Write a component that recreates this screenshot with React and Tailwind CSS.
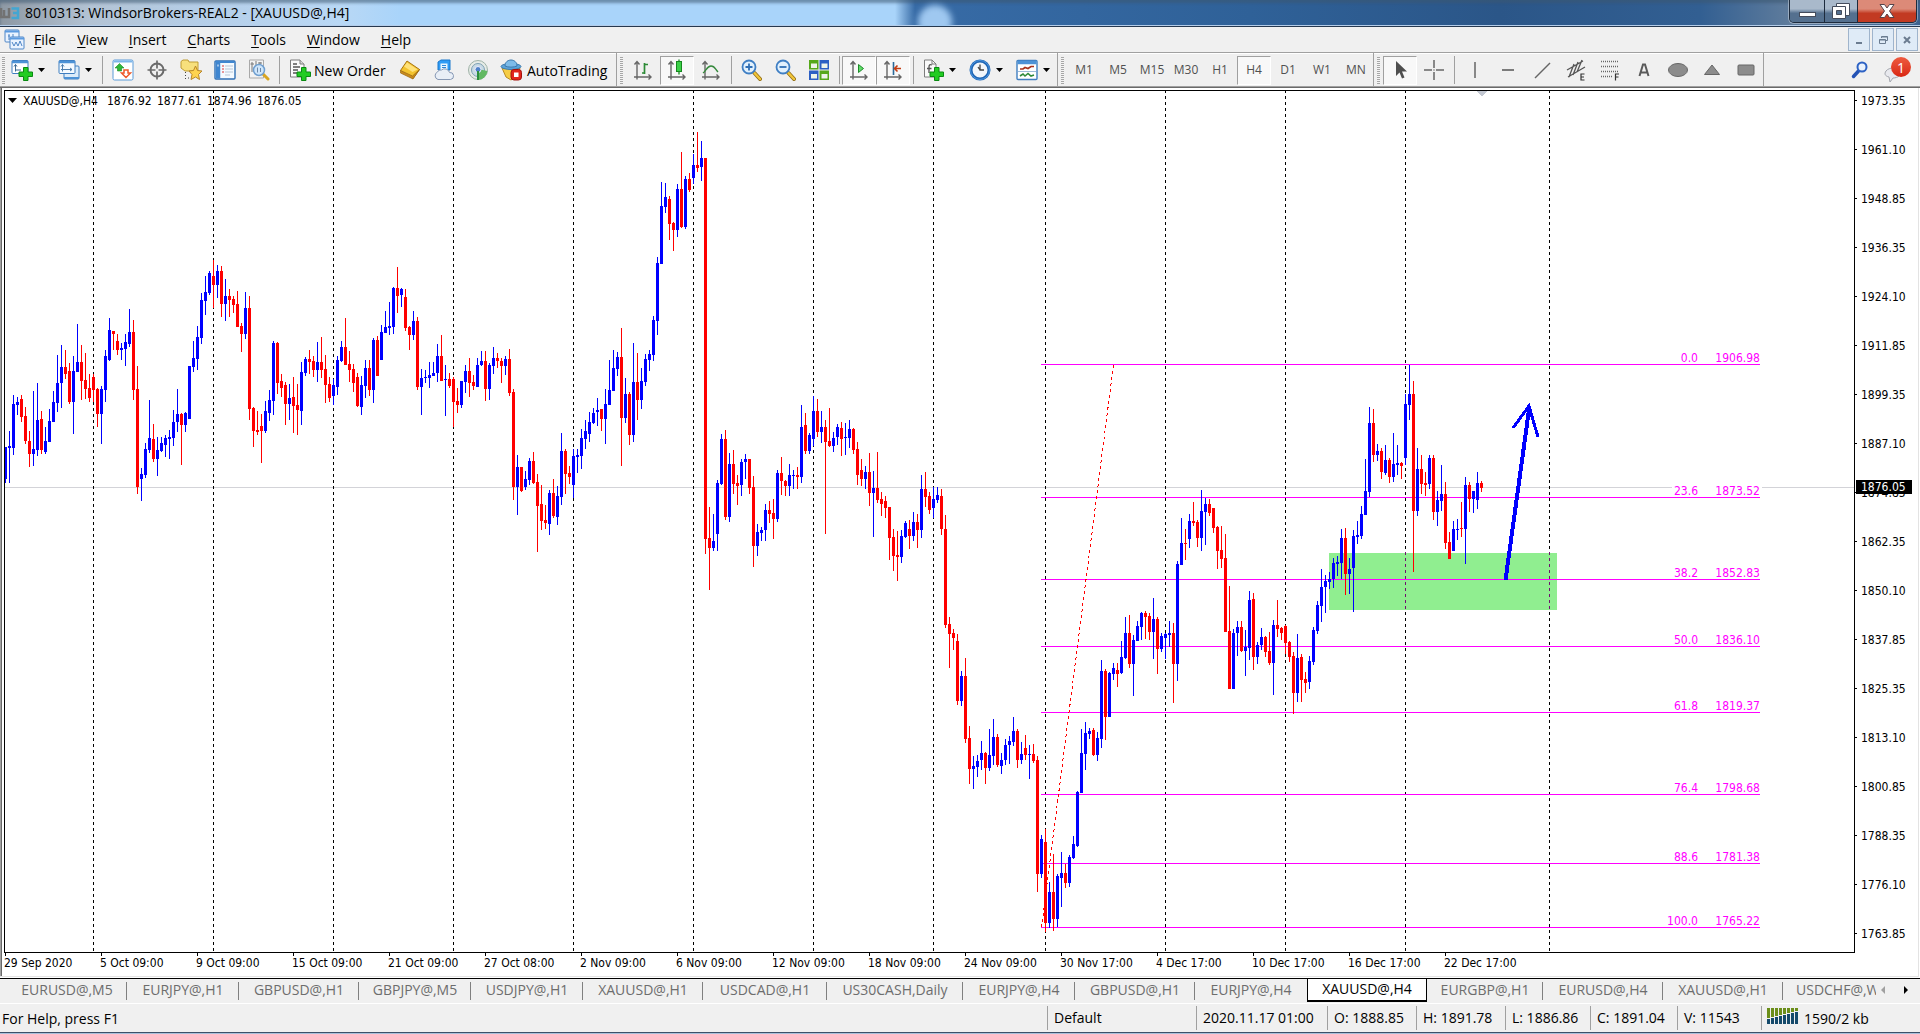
import clsx from 'clsx';

// direction (u/d), high, body top, body bottom, low - one bar every 4px
const BARS = `
u447 447 479 483,u431 446 448 483,u395 404 448 455,u397 402 405 415,d395 399 417 422,d407 416 441 444,d431 441 454 467,u391 449 454 466,
u383 420 450 456,d411 419 450 454,u427 441 452 454,u409 421 442 442,u391 402 422 422,u355 383 403 412,u345 367 383 408,d350 367 374 379,
d363 371 402 404,u356 371 402 434,u324 362 372 372,d345 362 381 400,d353 380 389 399,d374 388 398 402,d374 377 390 402,d388 389 414 427,
u386 389 414 444,u350 356 390 402,u318 330 360 361,d331 331 334 350,d334 341 350 355,u343 348 350 360,u334 342 349 366,u309 332 344 347,
d320 332 390 400,d366 389 487 494,u468 474 479 501,u443 449 475 478,u400 438 450 453,d424 439 459 462,u437 450 459 476,u437 443 451 452,
u435 438 445 457,u430 437 439 459,u410 422 438 446,u389 414 422 432,d413 414 425 465,u412 413 425 432,u366 366 419 419,u341 358 367 372,
u326 337 359 370,u293 300 338 344,u276 292 301 315,u271 273 293 295,d260 276 285 308,u265 271 285 298,d266 271 304 317,u279 296 304 321,
d289 296 300 317,d296 299 305 313,d291 304 327 327,d323 326 334 352,u292 308 334 339,d296 308 409 420,d407 408 431 447,d411 430 432 435,
d414 426 431 463,u401 411 431 433,u390 400 413 421,u341 343 401 415,d342 343 383 394,d374 381 388 397,d382 385 404 425,u384 398 404 420,
d377 397 406 433,d384 405 410 435,u362 372 411 425,u357 359 373 376,d350 359 362 374,d356 361 370 377,u342 362 370 382,d337 362 370 378,
d355 369 385 403,d377 384 398 402,u379 385 396 405,u356 360 387 395,u341 347 361 362,d318 347 365 365,d351 364 370 382,d364 369 383 392,
d373 377 406 407,u376 385 407 415,u360 368 386 398,d360 368 390 396,u338 340 390 403,d336 340 376 376,u325 332 360 360,u311 327 333 333,
u302 326 328 335,u287 288 327 334,d267 288 296 313,u288 289 295 307,d289 297 328 331,d326 327 335 350,u311 321 335 340,d317 321 387 390,
u369 378 387 415,u370 377 378 383,u362 375 378 388,u362 373 376 376,u344 356 373 382,d335 356 381 381,u365 379 380 416,d373 379 386 388,
d377 379 402 427,d388 401 405 413,u381 381 405 408,u365 371 382 393,d358 371 383 397,d375 382 386 390,u358 365 387 387,u351 361 365 366,
d351 361 389 401,u363 365 389 400,u347 358 366 374,d353 358 361 368,d358 361 366 383,u356 359 366 375,d349 359 393 396,d389 392 487 500,
u455 467 487 515,d467 467 491 492,u471 479 487 490,u458 461 480 485,d452 461 483 484,d474 482 506 552,d485 504 521 530,d505 520 523 529,
u490 493 524 535,d479 493 516 518,u486 496 517 525,u433 451 497 505,d449 451 474 494,d466 473 477 484,u449 456 485 498,u449 455 457 473,
u429 438 456 469,u420 431 439 449,u412 422 434 442,u408 413 423 424,u398 410 412 426,d409 409 419 431,u389 404 419 444,u360 390 405 405,
u350 368 391 391,u352 357 369 376,d328 357 418 466,u378 394 418 423,d392 394 435 445,u343 382 435 442,d353 382 400 420,u368 381 400 409,
u354 359 382 386,u350 354 360 371,u316 320 355 361,u257 263 321 335,u182 206 264 264,u183 197 207 213,d196 199 224 240,d222 223 230 251,
u184 189 230 237,d152 189 227 228,u176 179 227 229,d173 179 190 192,u154 165 178 184,d132 165 168 172,u141 158 167 181,d158 158 539 554,
d507 538 548 590,u514 541 548 551,u480 483 534 551,u434 439 484 485,d430 439 517 520,u453 464 517 522,d450 464 484 494,d475 483 486 505,
u459 462 485 496,u454 459 462 479,d459 459 488 494,d476 487 546 567,u524 532 546 556,u527 530 533 541,u504 510 530 541,d501 510 514 523,
d499 513 519 539,u470 473 519 522,d457 473 481 495,d480 481 486 496,u464 475 486 496,u470 475 476 489,d467 475 477 489,u405 427 477 483,
d413 425 451 454,u433 435 451 454,u396 411 439 446,d399 411 432 437,u411 427 432 443,d420 427 442 534,d408 441 446 447,u432 438 446 452,
u424 427 437 445,d422 428 439 456,u423 437 438 455,u420 429 438 448,d428 429 450 454,d442 449 475 485,d459 470 479 486,u466 472 479 489,
d453 472 493 506,u471 488 493 537,d452 488 500 503,d492 499 504 516,d496 501 508 518,d507 507 538 560,d529 537 556 571,d531 555 557 581,
u530 536 557 563,u521 523 537 538,d520 529 536 549,u512 522 536 541,d514 522 530 548,u475 489 530 538,d472 489 497 507,d492 496 510 514,
u487 499 508 518,u487 495 500 503,d489 496 529 535,d515 529 625 628,d617 624 634 668,d629 633 638 650,d634 641 701 705,u671 676 701 706,
d658 676 739 743,d726 738 769 784,u756 766 769 789,u755 761 767 777,u741 753 760 770,d752 753 768 784,u729 755 768 771,u719 737 756 765,
d734 737 765 767,u753 760 766 774,u739 745 760 765,u736 741 745 764,u717 731 742 746,d729 731 760 768,u742 754 760 764,d735 748 755 760,
u745 754 755 779,d744 754 761 763,d756 760 874 892,u835 839 874 878,d829 842 923 932,u882 892 923 928,d854 892 919 931,u874 876 919 927,
u852 873 878 907,d864 873 883 888,u855 857 883 887,u836 844 858 859,u791 792 846 847,u729 753 793 793,u722 733 754 770,u728 731 734 739,
d728 730 755 756,u732 738 755 761,u660 671 739 748,d669 671 717 740,u672 673 717 717,u663 668 674 680,d663 670 674 687,u641 657 673 674,
u617 633 658 659,d615 633 664 668,u635 640 664 696,u621 626 641 641,u612 613 627 640,d611 613 617 639,d613 616 632 640,u598 619 632 659,
d617 619 649 674,u633 636 649 652,u633 634 638 659,u621 633 635 647,d623 633 664 703,u561 564 664 681,u518 543 565 565,d529 543 544 560,
u514 521 539 548,d502 521 523 526,d520 522 538 547,u490 511 538 551,u498 504 512 545,d499 504 513 516,d508 508 528 533,d526 527 551 569,
d526 550 559 568,d534 558 632 632,d586 631 689 689,u629 633 689 689,u621 627 633 656,d621 627 651 652,u630 647 651 676,u591 600 648 660,
d593 599 657 670,u642 645 657 664,u628 637 645 650,d636 637 652 657,d632 651 663 665,u620 625 663 695,d600 625 629 637,d627 628 633 640,
d625 626 643 654,d641 642 657 662,d652 656 693 714,u634 658 693 702,d654 657 680 702,d672 679 683 693,u656 661 682 689,u627 630 662 665,
u601 605 631 634,u569 587 606 622,u575 581 587 613,u572 579 582 589,u558 563 579 588,u556 562 564 576,u529 538 563 579,d528 538 574 595,
u558 569 574 594,u530 536 568 612,u521 535 537 544,u506 514 536 539,u459 491 515 515,u407 423 492 497,d409 423 455 462,u444 451 455 461,
d448 451 472 479,u445 460 473 475,d458 460 477 483,u433 464 477 482,u445 463 465 475,d462 463 466 479,u394 404 458 465,u365 394 405 420,
d381 394 511 572,u448 469 511 516,d455 469 484 494,d472 483 485 496,u455 458 484 489,d455 458 512 520,u491 500 512 526,u465 494 501 511,
d482 494 543 549,d532 542 559 559,u521 529 551 551,u519 529 530 540,d502 528 529 537,u477 485 529 564,d482 485 499 512,u491 491 499 513,
u472 483 500 509,d481 483 488 492`
  .trim()
  .split(/,\s*/)
  .map((bar) => [bar[0], ...bar.slice(1).split(' ').map(Number)]);

const SEPARATORS = [93, 213, 333, 453, 573, 693, 813, 933, 1045, 1165, 1285, 1405, 1549];

const PRICES = [
  '1973.35', '1961.10', '1948.85', '1936.35', '1924.10', '1911.85', '1899.35', '1887.10', '1874.85',
  '1862.35', '1850.10', '1837.85', '1825.35', '1813.10', '1800.85', '1788.35', '1776.10', '1763.85',
];

const OHLC = ['1876.92', '1877.61', '1874.96', '1876.05'];

const TIMES = [
  '29 Sep 2020', '5 Oct 09:00', '9 Oct 09:00', '15 Oct 09:00', '21 Oct 09:00', '27 Oct 08:00',
  '2 Nov 09:00', '6 Nov 09:00', '12 Nov 09:00', '18 Nov 09:00', '24 Nov 09:00', '30 Nov 17:00',
  '4 Dec 17:00', '10 Dec 17:00', '16 Dec 17:00', '22 Dec 17:00',
];

const FIBS = [
  ['0.0', '1906.98', 364],
  ['23.6', '1873.52', 497],
  ['38.2', '1852.83', 579],
  ['50.0', '1836.10', 646],
  ['61.8', '1819.37', 712],
  ['76.4', '1798.68', 794],
  ['88.6', '1781.38', 863],
  ['100.0', '1765.22', 927],
];

const TABS = [
  ['EURUSD@,M5', 'w-[120px]'],
  ['EURJPY@,H1', 'w-[112px]'],
  ['GBPUSD@,H1', 'w-[120px]'],
  ['GBPJPY@,M5', 'w-[112px]'],
  ['USDJPY@,H1', 'w-[112px]'],
  ['XAUUSD@,H1', 'w-[120px]'],
  ['USDCAD@,H1', 'w-[124px]'],
  ['US30CASH,Daily', 'w-[136px]'],
  ['EURJPY@,H4', 'w-[112px]'],
  ['GBPUSD@,H1', 'w-[120px]'],
  ['EURJPY@,H4', 'w-[112px]'],
  ['XAUUSD@,H4', 'w-[120px]'],
  ['EURGBP@,H1', 'w-[116px]'],
  ['EURUSD@,H4', 'w-[120px]'],
  ['XAUUSD@,H1', 'w-[120px]'],
];

const STATUS = [
  ['Default', 'w-[149px]'],
  ['2020.11.17 01:00', 'w-[131px]'],
  ['O: 1888.85', 'w-[89px]'],
  ['H: 1891.78', 'w-[89px]'],
  ['L: 1886.86', 'w-[85px]'],
  ['C: 1891.04', 'w-[87px]'],
  ['V: 11543', 'w-[84px]'],
];

const MENU = ['File', 'View', 'Insert', 'Charts', 'Tools', 'Window', 'Help'];
const FRAMES = ['M1', 'M5', 'M15', 'M30', 'H1', 'H4', 'D1', 'W1', 'MN'];

/* ---------- icons, all on a 22px grid ---------- */

function Icon({ children, className }) {
  return (
    <svg viewBox="0 0 22 22" className={clsx('size-[22px] shrink-0', className)} fill="none" aria-hidden="true">
      {children}
    </svg>
  );
}

function Plus() {
  return (
    <path
      d="M12.500 8.500h4.500v4.500h4.500v4.500H17v4h-4.500v-4H8V13h4.500z"
      fill="#22cc22"
      stroke="#0a8a12"
    />
  );
}

const NewChartIcon = () => (
  <Icon>
    <rect x="1" y="1.500" width="16" height="13" rx="1" fill="#fff" stroke="#3f7ec0" />
    <path d="M1 3h16" stroke="#4d92d6" strokeWidth="2.500" />
    <path d="M4.500 5.500v7m-1.500-5 1.500-2 1.500 2M4 11h6" stroke="#3d6a94" />
    <Plus />
  </Icon>
);

const WindowsIcon = () => (
  <Icon>
    <rect x="6" y="7" width="15" height="13" rx="1" fill="#dcecfa" stroke="#3f7ec0" />
    <path d="M6 19h15" stroke="#4d92d6" strokeWidth="2" />
    <rect x="1" y="1.500" width="16" height="13" rx="1" fill="#f5faff" stroke="#3f7ec0" />
    <path d="M1 3h16" stroke="#4d92d6" strokeWidth="2.500" />
    <path d="M4.500 5.500v7m-1.500-5 1.500-2 1.500 2M3 10.500h11m-2-1.500 2 1.500-2 1.500" stroke="#4f7fae" />
  </Icon>
);

const MarketIcon = () => (
  <Icon>
    <rect x="1" y="1" width="20" height="20" rx="1.500" fill="#fff" stroke="#5b9bd8" />
    <path d="M1.500 2.500h19" stroke="#7db6ea" strokeWidth="2" />
    <path d="M7.500 4.500 12 9H9.500v3h-4V9H3z" fill="#2fb83a" stroke="#178a22" strokeWidth=".6" />
    <path d="M14 18.500 9.500 14H12v-3h4v3h2.500z" fill="#fff" stroke="#ee5a2a" strokeWidth="1.500" />
  </Icon>
);

const CrosshairIcon = () => (
  <Icon>
    <circle cx="11" cy="11" r="6.500" stroke="#6a6a6a" strokeWidth="2" />
    <path d="M11 1.500v8M11 12.500v8M1.500 11h8M12.500 11h8" stroke="#6a6a6a" strokeWidth="1.700" />
  </Icon>
);

const FolderStarIcon = () => (
  <Icon>
    <path d="M1 2.500 3 1h5l1 2h9v9H5L1 9z" fill="#f7e07c" stroke="#bf9c33" />
    <path d="M5.500 13v8M8 19h2" stroke="#444" strokeDasharray="1 2" />
    <path d="m15.500 7 2 4.500 4.500.500-3.500 3.500 1 5-4-2.500-4.500 2.500 1-5L9 12l4.500-.500z" fill="#ffd34f" stroke="#b8862a" />
  </Icon>
);

const NavigatorIcon = () => (
  <Icon>
    <rect x="1" y="2" width="20" height="18" rx="1" fill="#f4faff" stroke="#2f6fb5" strokeWidth="1.400" />
    <path d="M1.500 3h19" stroke="#3f86d0" strokeWidth="2" />
    <path d="M4 4v15.500" stroke="#3f86d0" strokeWidth="4.500" />
    <path d="M8 7h2M8 10h2M8 13h2" stroke="#d33" />
    <path d="M11 7h8M11 10h8M11 13h8M11 16h5" stroke="#b8c6d6" />
    <path d="M4 5.500v2" stroke="#fff" />
  </Icon>
);

const TesterIcon = () => (
  <Icon>
    <path d="M1.500 1h14v18h-14z" fill="#f3f3f3" stroke="#a9a9a9" />
    <path d="M4 3v10M8 2v6M12 3v5M2.500 5H6M10 4h4" stroke="#777" />
    <path d="m15 15 5 5" stroke="#d9a520" strokeWidth="3" strokeLinecap="round" />
    <circle cx="11" cy="11" r="5.500" fill="#cfe6fb" stroke="#6f9fd0" strokeWidth="1.500" />
    <path d="M9.500 8.500v5M12.500 9v4" stroke="#6c88a8" />
  </Icon>
);

const NewOrderIcon = () => (
  <Icon>
    <path d="M1.500 1H11l4 4v13H1.500z" fill="#fafafa" stroke="#7d7d7d" />
    <path d="M11 1v4h4" fill="#d8d8d8" stroke="#7d7d7d" />
    <path d="M4 5h4M4 8h7M4 11h5M4 14h4" stroke="#555" strokeWidth="1.300" />
    <Plus />
  </Icon>
);

const BookIcon = () => (
  <Icon>
    <path d="M8 2 20.500 10.500 14 19.500 1.500 11.500z" fill="#f3c32f" stroke="#a87412" />
    <path d="M8 3.500 18.500 10.500 13.500 13 5 7.500z" fill="#ffe27a" />
    <path d="m1.500 11.500 12 5.500 7-6.500-6.500 9.500-12.500-6z" fill="#c98a1c" stroke="#9a6a12" strokeWidth=".7" />
  </Icon>
);

const CloudIcon = () => (
  <Icon>
    <path d="m5 3 3-2h9v10H5z" fill="#2f9bf5" stroke="#1b78cc" />
    <path d="M7.500 4.500h7V11h-7z" fill="#eaf6ff" />
    <path d="M9 6.500h4M9 8.500h4" stroke="#2f86d6" />
    <path d="M5 20.500a4 4 0 0 1-.5-7.500 3.500 3.500 0 0 1 4-2 5 5 0 0 1 8 2.500 3.500 3.500 0 0 1 1 7z" fill="#e8eef6" stroke="#8698b4" />
  </Icon>
);

const SignalIcon = () => (
  <Icon>
    <circle cx="11" cy="11" r="9.500" fill="#e6ebe6" stroke="#9fb3a8" />
    <circle cx="11" cy="11" r="6.500" fill="#c9dbe4" stroke="#7da0b4" />
    <path d="M11 10v11a10 10 0 0 0 9.500-9z" fill="#62b962" />
    <circle cx="11" cy="10.500" r="3" fill="#4f82c8" stroke="#eef" />
    <path d="M11 12v9" stroke="#2c8f3c" strokeWidth="2" />
  </Icon>
);

const AutoTradingIcon = () => (
  <Icon>
    <path d="M2 9h18l-3 8-6 4-5-3z" fill="#f6cd45" stroke="#b98a1f" />
    <ellipse cx="11" cy="7.500" rx="10" ry="3" fill="#5ba3da" stroke="#3a79ad" />
    <path d="M5 7c0-8 12-8 12 0-3 1.500-9 1.500-12 0z" fill="#7dbbe8" stroke="#3a79ad" />
    <rect x="11" y="10.500" width="10.500" height="10.500" rx="3" fill="#e2261c" stroke="#a3120c" />
    <rect x="14" y="13.500" width="4.500" height="4.500" fill="#fff" />
  </Icon>
);

function Axes() {
  return <path d="M5 20.500V3M2.500 5.500 5 2.500l2.500 3M2 18h17M16.500 15.500l2.500 2.500-2.500 2.500" stroke="#666" strokeWidth="1.400" />;
}

const BarsIcon = () => (
  <Icon>
    <Axes />
    <path d="M12.500 4v11M12.500 5.500H16M10 14h2.500" stroke="#2b8a35" strokeWidth="1.700" />
  </Icon>
);

const CandleIcon = () => (
  <Icon>
    <Axes />
    <path d="M13 .5v15" stroke="#16881f" strokeWidth="1.300" />
    <rect x="10.500" y="2.500" width="5" height="10" fill="#3bd048" stroke="#16881f" />
  </Icon>
);

const LineIcon = () => (
  <Icon>
    <Axes />
    <path d="M3 14c3-2 4-7 8-7s4 3 7 6" stroke="#35893c" strokeWidth="1.400" />
  </Icon>
);

function ZoomIcon({ plus }) {
  return (
    <Icon>
      <path d="m14.500 14 5.500 6" stroke="#8f6a14" strokeWidth="4" strokeLinecap="round" />
      <path d="m14.500 14 5.500 6" stroke="#f0c53a" strokeWidth="2.500" strokeLinecap="round" />
      <circle cx="9" cy="8" r="6.500" fill="#e2f1fd" stroke="#3f7fc4" strokeWidth="1.800" />
      <path d={plus ? 'M5.500 8h7M9 4.500v7' : 'M5.500 8h7'} stroke="#2f6fb5" strokeWidth="1.800" />
    </Icon>
  );
}

const TileIcon = () => (
  <Icon>
    <path d="M1 1h9.500v9.500H1z" fill="#56a81a" />
    <path d="M11.500 1H21v9.500h-9.500z" fill="#2c5fc4" />
    <path d="M1 11.500h9.500V21H1z" fill="#2c5fc4" />
    <path d="M11.500 11.500H21V21h-9.500z" fill="#56a81a" />
    <path d="M3 4.500h6V9H3zM13.500 4.500h6V9h-6zM3 15h6v4.500H3zM13.500 15h6v4.500h-6z" fill="#eef4ea" />
  </Icon>
);

const AutoScrollIcon = () => (
  <Icon>
    <Axes />
    <path d="m10.500 5.500 5 4-5 4z" fill="#5fdc68" stroke="#1c8a28" />
  </Icon>
);

const ShiftIcon = () => (
  <Icon>
    <Axes />
    <path d="M11.500 3v13" stroke="#2b6a9a" strokeWidth="1.600" />
    <path d="M19 9.500h-6m2.500-3-3 3 3 3" stroke="#c33c12" strokeWidth="1.600" />
  </Icon>
);

const IndicatorIcon = () => (
  <Icon>
    <path d="M2.500 1H10l4 4v13H2.500z" fill="#fafafa" stroke="#7d7d7d" />
    <path d="M10 1v4h4" stroke="#7d7d7d" />
    <path d="M10 6c-2-1-3 0-3 2v6M5 9.500h4.500" stroke="#555" strokeWidth="1.300" />
    <Plus />
  </Icon>
);

const ClockIcon = () => (
  <Icon>
    <circle cx="11" cy="11" r="9" fill="#f2f6fa" stroke="#1f66b5" strokeWidth="3" />
    <circle cx="11" cy="11" r="9.500" stroke="#58a2ea" strokeWidth=".8" />
    <path d="M11 5.500V11h4M11 11l-2-3" stroke="#444" strokeWidth="1.300" />
  </Icon>
);

const TemplateIcon = () => (
  <Icon>
    <rect x="1" y="1.500" width="20" height="19" rx="1" fill="#fff" stroke="#3f7ec0" strokeWidth="1.400" />
    <path d="M1.500 3.500h19" stroke="#4d92d6" strokeWidth="3.500" />
    <path d="M4 10h3l2-1.500 3 1 3-2h3" stroke="#a8321c" strokeWidth="1.600" />
    <path d="M2 12.500h18" stroke="#9dbbd8" />
    <path d="m4 17 3-2 2 2 3-2.500 3 2.500 3-1" stroke="#2e8a38" strokeWidth="1.600" />
  </Icon>
);

const CursorIcon = () => (
  <Icon>
    <path d="M7 2v15l3.500-3.500 2.500 6 2.500-1-2.500-6h5z" fill="#4f4f4f" />
  </Icon>
);

const CrossIcon = () => (
  <Icon>
    <path d="M11 1v8M11 13v8M1 11h8M13 11h8M10.500 11h1" stroke="#666" strokeWidth="1.500" />
  </Icon>
);

const DRAW_TOOLS = [
  ['Vertical line', <path d="M12 3v16" stroke="#666" strokeWidth="1.500" />],
  ['Horizontal line', <path d="M5 11h12" stroke="#666" strokeWidth="1.700" />],
  ['Trendline', <path d="M4 19 19 4" stroke="#666" strokeWidth="1.500" />],
  [
    'Equidistant channel',
    <>
      <path d="M2 11 18 2M3 18 20 8M4 18 9 5M8 16l5-13M12 13l5-12" stroke="#555" strokeWidth="1.300" />
      <path d="M19.500 15H16v6h3.500M16 18h3" stroke="#333" strokeWidth="1.200" />
    </>,
  ],
  [
    'Fibonacci retracement',
    <>
      <path d="M2 2.500h18M2 7.500h18M2 12.500h18M2 17.500h12" stroke="#666" strokeDasharray="1 1" strokeWidth="1.300" />
      <path d="M20 15h-3.500v6.500M16.500 18h3" stroke="#333" strokeWidth="1.200" />
    </>,
  ],
  ['Text', <path d="M6.500 17 10 5.500h2L15.500 17M8 13.500h6" stroke="#5a5a5a" strokeWidth="2" />],
  ['Ellipse', <ellipse cx="11" cy="11" rx="9.500" ry="6.500" fill="#8c8c8c" stroke="#666" />],
  ['Triangle', <path d="m11 6 7.500 9.500h-15z" fill="#8c8c8c" stroke="#666" />],
  ['Rectangle', <rect x="3" y="6" width="16" height="10" rx="1" fill="#8c8c8c" stroke="#666" />],
];

/* ---------- toolbar pieces ---------- */

function ToolButton({ label, active, children }) {
  return (
    <button
      type="button"
      aria-label={label}
      className={clsx(
        'flex h-[29px] w-[34px] shrink-0 items-center justify-center border',
        active ? 'border-[#a0a0a0] border-r-white border-b-white bg-[#f8f8f8]' : 'border-transparent',
      )}
    >
      {children}
    </button>
  );
}

function DropButton({ label, children }) {
  return (
    <button type="button" aria-label={label} className="flex h-[29px] w-[47px] shrink-0 items-center gap-[5px] pl-[6px]">
      {children}
      <svg viewBox="0 0 7 4" className="h-[4px] w-[7px]" aria-hidden="true">
        <path d="M0 0h7L3.500 4z" />
      </svg>
    </button>
  );
}

const Divider = ({ tight }) => (
  <div className={clsx('ml-[3px] h-[28px] w-px shrink-0 bg-[#a0a0a0]', tight ? 'mr-[2px]' : 'mr-[3px]')} />
);

function Grip({ first }) {
  return (
    <div className={clsx('flex h-full shrink-0 items-center', first ? 'pl-[2px]' : 'border-l border-[#a0a0a0] px-[3px]')}>
      <div className="h-[27px] w-[3px] bg-[repeating-linear-gradient(#a6a6a6_0_1px,#f4f4f4_1px_2px)]" />
    </div>
  );
}

function TitleBar() {
  return (
    <header className="relative flex h-[27px] items-center justify-between overflow-hidden border-b border-[#26384f] bg-[linear-gradient(90deg,#8d98a3_0,#b3c3d4_90px,#b5cee8_200px,#b9d8f5_340px,#a9d4fa_400px,#a9d4fa_895px,#376ba6_915px,#2f6198_1250px,#2b5688_1500px,#325f92_1700px,#5f7c9c_1790px,#3d6390_100%)] shadow-[inset_0_-1px_0_#b4cdea,inset_0_3px_3px_#3c566f90]">
      <div className="absolute top-[5px] left-[918px] size-[34px] rounded-full bg-[#9fc8f0] blur-[3px]" />
      <div className="relative flex items-center">
        <svg viewBox="0 0 20 18" className="mr-[5px] h-[18px] w-[20px]" fill="none" aria-hidden="true">
          <path d="M1 4v9h3V6m0 7h5V4" stroke="#727272" strokeWidth="2.500" />
          <path d="M11.500 4.500H18V14h-6.500M13 9h5" stroke="#43a6d2" strokeWidth="2.500" />
        </svg>
        <h1 className="text-[14px] leading-[24px]">8010313: WindsorBrokers-REAL2 - [XAUUSD@,H4]</h1>
      </div>
      <div className="relative mr-[3px] flex h-[23px] self-start overflow-hidden rounded-b-[5px] border border-t-0 border-[#1d2b3d] shadow-[0_0_0_1px_#ffffff60]">
        <button type="button" aria-label="Minimize" className="flex w-[35px] items-end justify-center border-r border-[#1d2b3d] bg-linear-to-b from-[#a9b9cb] from-40% to-[#54708f] to-60% pb-[5px]">
          <span className="h-[5px] w-[17px] border border-[#444c5c] bg-white" />
        </button>
        <button type="button" aria-label="Restore" className="flex w-[33px] items-center justify-center border-r border-[#1d2b3d] bg-linear-to-b from-[#a9b9cb] from-40% to-[#54708f] to-60%">
          <svg viewBox="0 0 18 18" className="size-[18px]" fill="#fff" stroke="#444c5c" aria-hidden="true">
            <path d="M4.500 1.500h13v12h-13z" />
            <path d="M.5 4.500h13v12H.5z" />
            <path d="M4.500 8.500h5v4h-5z" fill="#54708f" />
          </svg>
        </button>
        <button type="button" aria-label="Close" className="flex w-[58px] items-center justify-center bg-linear-to-b from-[#dc8a78] from-40% to-[#c23a22] to-60%">
          <svg viewBox="0 0 16 14" className="h-[14px] w-[16px]" aria-hidden="true">
            <path d="M1 .5h4.500L8 4l2.500-3.500H15L10.500 7l4.500 6.500h-4.500L8 10l-2.500 3.500H1L5.500 7z" fill="#fff" stroke="#54434a" />
          </svg>
        </button>
      </div>
    </header>
  );
}

function MenuBar() {
  return (
    <nav className="flex h-[25px] items-center justify-between">
      <div className="flex items-center gap-[21px]">
        <Icon className="-mr-[13px] ml-[4px]">
          <rect x="1" y="1" width="14" height="12" rx="1" fill="#eaf3ff" stroke="#4f86c6" />
          <path d="M1 2.500h14" stroke="#5c9be0" strokeWidth="2" />
          <path d="M5 5v6M9 5v4M4 7h2" stroke="#4f86c6" />
          <rect x="6" y="8" width="14" height="12" rx="1" fill="#eaf3ff" stroke="#4f86c6" />
          <path d="M6 9.500h14" stroke="#5c9be0" strokeWidth="2" />
          <path d="m8 13 2 4 2-4 2 4 2-5 2 5" stroke="#4f86c6" />
        </Icon>
        {MENU.map((item) => (
          <button key={item} type="button" className="text-[14px] leading-[20px]">
            <span className="underline underline-offset-2">{item[0]}</span>
            {item.slice(1)}
          </button>
        ))}
      </div>
      <div className="mr-[2px] flex gap-[2px]">
        {[
          ['Minimize chart', <path d="M6 12h6" strokeWidth="2" />],
          ['Restore chart', <path d="M7.500 7V5.500h6v4H12M5.500 8.500h6v4h-6zM5.500 9h6M7.500 6h6" />],
          ['Close chart', <path d="m6 6 6 6M12 6l-6 6" strokeWidth="2" />],
        ].map(([label, shape]) => (
          <button key={label} type="button" aria-label={label} className="flex h-[23px] w-[22px] items-center justify-center border border-[#9fb4cc] bg-[#dfebf7]">
            <svg viewBox="0 0 18 18" className="size-[18px]" fill="none" stroke="#6b7c90" aria-hidden="true">
              {shape}
            </svg>
          </button>
        ))}
      </div>
    </nav>
  );
}

function Toolbar() {
  return (
    <div className="flex h-[36px] items-center justify-between border-t border-b border-t-[#a0a0a0] border-b-[#696969] shadow-[inset_0_1px_0_#fff,inset_0_-1px_0_#a0a0a0]">
      <div className="flex h-full items-center">
        <Grip first />
        <DropButton label="New chart"><NewChartIcon /></DropButton>
        <DropButton label="Profiles"><WindowsIcon /></DropButton>
        <Divider />
        <ToolButton label="Market watch"><MarketIcon /></ToolButton>
        <ToolButton label="Data window"><CrosshairIcon /></ToolButton>
        <ToolButton label="Navigator"><FolderStarIcon /></ToolButton>
        <ToolButton label="Terminal"><NavigatorIcon /></ToolButton>
        <ToolButton label="Strategy tester"><TesterIcon /></ToolButton>
        <Divider />
        <button type="button" className="flex h-[29px] w-[110px] shrink-0 items-center gap-[3px] pl-[6px] text-[14px] whitespace-nowrap">
          <NewOrderIcon />
          New Order
        </button>
        <ToolButton label="MetaEditor"><BookIcon /></ToolButton>
        <ToolButton label="Hosting"><CloudIcon /></ToolButton>
        <ToolButton label="Signals"><SignalIcon /></ToolButton>
        <button type="button" className="flex h-[29px] w-[121px] shrink-0 items-center gap-[5px] pl-[5px] text-[14px] whitespace-nowrap">
          <AutoTradingIcon />
          AutoTrading
        </button>
        <Grip />
        <ToolButton label="Bar chart"><BarsIcon /></ToolButton>
        <ToolButton label="Candlesticks" active><CandleIcon /></ToolButton>
        <ToolButton label="Line chart"><LineIcon /></ToolButton>
        <Divider tight />
        <ToolButton label="Zoom in"><ZoomIcon plus /></ToolButton>
        <ToolButton label="Zoom out"><ZoomIcon /></ToolButton>
        <ToolButton label="Tile windows"><TileIcon /></ToolButton>
        <Divider tight />
        <ToolButton label="Auto scroll" active><AutoScrollIcon /></ToolButton>
        <ToolButton label="Chart shift" active><ShiftIcon /></ToolButton>
        <Divider tight />
        <DropButton label="Indicators"><IndicatorIcon /></DropButton>
        <DropButton label="Periods"><ClockIcon /></DropButton>
        <DropButton label="Templates"><TemplateIcon /></DropButton>
        <Grip />
        {FRAMES.map((frame) => (
          <ToolButton key={frame} label={frame} active={frame === 'H4'}>
            <span className="text-[12px] text-[#505050]">{frame}</span>
          </ToolButton>
        ))}
        <Grip />
        <ToolButton label="Cursor" active><CursorIcon /></ToolButton>
        <ToolButton label="Crosshair"><CrossIcon /></ToolButton>
        <Divider tight />
        {DRAW_TOOLS.map(([label, shape]) => (
          <ToolButton key={label} label={label}>
            <Icon>{shape}</Icon>
          </ToolButton>
        ))}
        <div className="h-full w-px bg-[#a0a0a0]" />
      </div>
      <div className="flex items-center gap-[14px] pr-[9px]">
        <button type="button" aria-label="Search">
          <svg viewBox="0 0 18 18" className="size-[18px]" fill="none" aria-hidden="true">
            <path d="m2.500 15.500 5-5.500" stroke="#2453b5" strokeWidth="3.500" strokeLinecap="round" />
            <circle cx="11" cy="6" r="4.500" fill="#eaf2fd" stroke="#2d62c4" strokeWidth="2" />
          </svg>
        </button>
        <button type="button" aria-label="Messages" className="relative h-[26px] w-[28px]">
          <svg viewBox="0 0 28 26" className="h-[26px] w-[28px]" aria-hidden="true">
            <path d="M3 14c3-4 12-4 14 0s-2 7-7 7l-3 4-1-5c-4-1-5-3-3-6z" fill="#e8e9ee" stroke="#a4a6ae" />
          </svg>
          <span className="absolute top-0 right-0 flex size-[20px] items-center justify-center rounded-full bg-linear-to-b from-[#ee5a3f] to-[#d92410] text-[14px] text-white">1</span>
        </button>
      </div>
    </div>
  );
}

/* ---------- chart ---------- */

function Chart() {
  return (
    <svg
      viewBox="0 88 1920 890"
      className="block w-full bg-white font-['DejaVu_Sans_Condensed','DejaVu_Sans',sans-serif] text-[12px]"
      role="img"
      aria-label="XAUUSD@,H4 candlestick chart"
    >
      <g shapeRendering="crispEdges">
        <path d="M0 88h1v888H0z" fill="#a0a0a0" />
        <path d="M1 88h1v888H1z" fill="#696969" />
        <path d="M0 976h1919v1H0zM1918 88h1v888h-1z" fill="#e3e3e3" />

        {/* bid line */}
        <path d="M5 487h1849v1H5z" fill="#d3d3d8" />

        {SEPARATORS.map((x) => (
          <path key={x} d={`M${x}.5 90V952`} stroke="#000" strokeDasharray="3 3" />
        ))}

        {/* demand zone */}
        <path d="M1329 553h228v57h-228z" fill="#90ee90" />
        <path d="M1405.500 552v58M1549.500 552v58" stroke="#6f116f" strokeDasharray="3 3" />

        {/* fibonacci retracement */}
        {FIBS.map(([level, , y]) => (
          <path key={level} d={`M1041 ${y}h719v1H1041z`} fill="#f0f" />
        ))}
        <path d="M1041.500 927.500 1113.500 364.500" stroke="#f00" strokeDasharray="3 3" />

        {BARS.map(([dir, high, top, bottom, low], i) => (
          <g key={i} fill={dir === 'u' ? '#00f' : '#f00'}>
            <rect x={5 + i * 4} y={high} width="1" height={low - high} />
            <rect x={4 + i * 4} y={top} width="3" height={Math.max(1, bottom - top)} />
          </g>
        ))}

        {/* plot frame and ticks */}
        <path d="M4 90h1851v1H4zM4 90h1v863H4zM1854 90h1v863h-1zM4 952h1851v1H4z" />
        {PRICES.map((price, i) => (
          <rect key={price} x="1855" y={100 + i * 49} width="2" height="1" />
        ))}
        {TIMES.map((time, i) => (
          <rect key={time} x={5 + i * 96} y="953" width="1" height="3" />
        ))}
        <path d="M1477 91h10l-5 6z" fill="#c3c8d2" />
      </g>

      <g fill="none" stroke="#00f" shapeRendering="crispEdges">
        <path d="M1505.500 580 1529.500 406" strokeWidth="4" />
        <path d="M1513 428l16-22 9 31" strokeWidth="3" />
      </g>

      {FIBS.map(([level, price, y]) => (
        <g key={level} fill="#f0f" textAnchor="end">
          {level === '23.6' && <path d="M1672 484h90v12h-90z" fill="#fff" />}
          <text x="1698" y={y - 2}>{level}</text>
          <text x="1760" y={y - 2}>{price}</text>
        </g>
      ))}

      {PRICES.map((price, i) => (
        <text key={price} x="1861" y={105 + i * 49}>{price}</text>
      ))}
      <path d="M1856 480h56v14h-56z" />
      <text x="1861" y="491" fill="#fff">1876.05</text>

      {TIMES.map((time, i) => (
        <text key={time} x={4 + i * 96} y="967">{time}</text>
      ))}

      <path d="M8 98h9l-4.500 5z" />
      <text x="23" y="105">XAUUSD@,H4</text>
      {OHLC.map((value, i) => (
        <text key={value} x={107 + i * 50} y="105">{value}</text>
      ))}
    </svg>
  );
}

function ChartTabs() {
  return (
    <div className="flex h-[26px] items-start overflow-hidden border-t border-b border-t-black border-b-white pl-[7px]">
      {TABS.map(([name, width], i) => (
        <button
          key={i}
          type="button"
          className={clsx(
            'relative shrink-0 text-center text-[14px] leading-[22px] whitespace-nowrap',
            width,
            i === 11
              ? '-mt-px h-[24px] border border-t-0 border-b-2 border-black bg-white text-black'
              : 'h-[22px] text-[#6d6d6d]',
          )}
        >
          {name}
          {i !== 10 && i !== 11 && <span className="absolute top-[3px] right-0 h-[18px] w-px bg-[#808080]" />}
        </button>
      ))}
      <button type="button" className="h-[22px] min-w-0 flex-1 overflow-hidden pl-[13px] text-left text-[14px] leading-[22px] whitespace-nowrap text-[#6d6d6d]">
        USDCHF@,Weekly
      </button>
      <div className="flex h-[22px] shrink-0 items-center gap-[19px] pr-[12px] pl-[5px]">
        <button type="button" aria-label="Previous tabs">
          <svg viewBox="0 0 4 8" className="h-[8px] w-[4px]" aria-hidden="true">
            <path d="M4 0v8L0 4z" fill="#a0a0a0" />
          </svg>
        </button>
        <button type="button" aria-label="Next tabs">
          <svg viewBox="0 0 4 8" className="h-[8px] w-[4px]" aria-hidden="true">
            <path d="M0 0v8l4-4z" />
          </svg>
        </button>
      </div>
    </div>
  );
}

function StatusBar() {
  return (
    <footer className="flex h-[28px] items-center justify-between text-[14px] whitespace-nowrap">
      <p className="pl-[2px]">For Help, press F1</p>
      <div className="flex">
        {STATUS.map(([text, width]) => (
          <div key={text} className={clsx('h-[24px] border-l border-[#a0a0a0] pl-[6px] leading-[24px]', width)}>
            {text}
          </div>
        ))}
        <div className="flex h-[24px] w-[159px] items-center gap-[5px] border-l border-[#a0a0a0] pl-[5px]">
          <svg viewBox="0 0 32 16" className="-mt-[4px] h-[16px] w-[32px]" aria-hidden="true">
            {[11, 10, 9, 8, 7, 6, 5, 4].map((split, i) => (
              <g key={split}>
                <rect x={i * 4} y="0" width="3" height={split - 1} fill="#6b8e1a" />
                <rect x={i * 4} y={split} width="3" height={16 - split} fill="#154a6b" />
              </g>
            ))}
          </svg>
          1590/2 kb
        </div>
      </div>
    </footer>
  );
}

export default function App() {
  return (
    <main className="flex min-h-screen w-full flex-col bg-[#f0f0f0] font-['Open_Sans','Noto_Sans',sans-serif] text-black">
      <TitleBar />
      <MenuBar />
      <Toolbar />
      <Chart />
      <ChartTabs />
      <StatusBar />
      <div className="h-[2px] border-t border-[#3c5068] bg-[#a9c0da]" />
    </main>
  );
}
